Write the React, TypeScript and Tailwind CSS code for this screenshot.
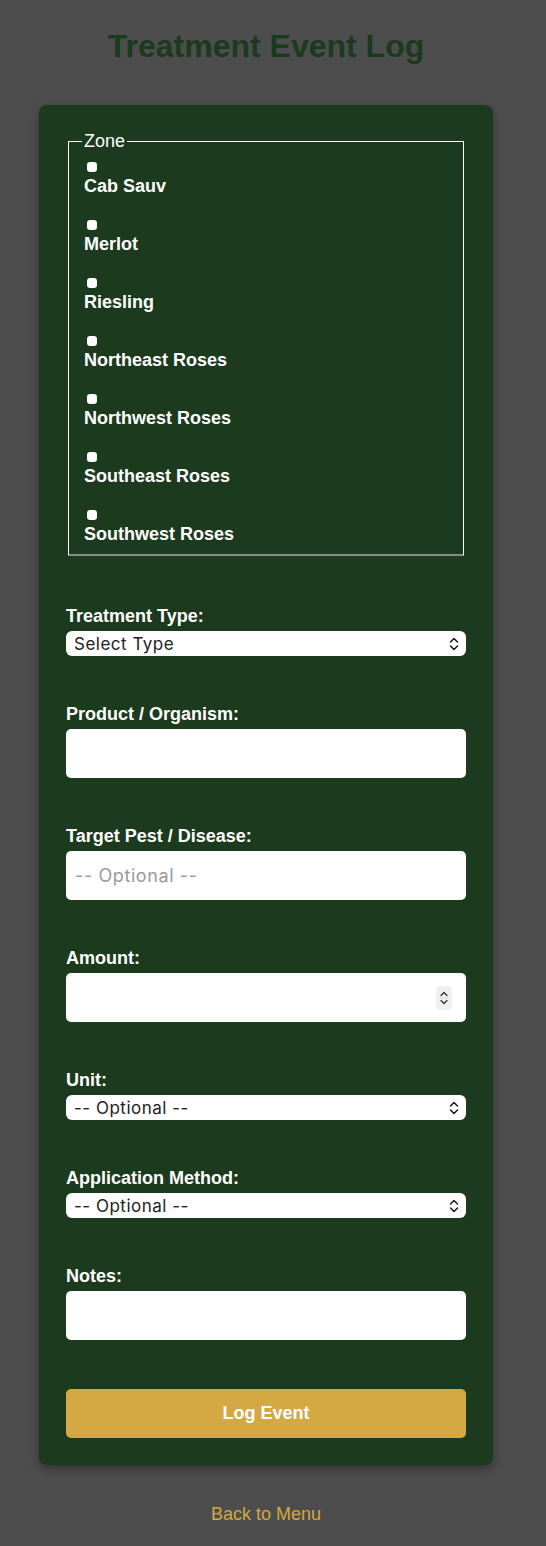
import React from "react";

const zones = [
  "Cab Sauv",
  "Merlot",
  "Riesling",
  "Northeast Roses",
  "Northwest Roses",
  "Southeast Roses",
  "Southwest Roses",
];

function Chevrons() {
  return (
    <svg width="10" height="14" viewBox="0 0 10 14" fill="none" stroke="#222" strokeWidth="1.6" strokeLinecap="round" strokeLinejoin="round">
      <path d="M1.5 5 L5 1.5 L8.5 5" />
      <path d="M1.5 9 L5 12.5 L8.5 9" />
    </svg>
  );
}

function Select({ text }: { text: string }) {
  return (
    <div className="h-[25px] w-full rounded-[6px] bg-white flex items-center pl-[8px] pr-[7px]">
      <span className="flex-1 text-[17px] leading-[20px] text-[#222] tracking-[0.5px]" style={{ fontFamily: "Inter, 'Liberation Sans', sans-serif" }}>
        {text}
      </span>
      <Chevrons />
    </div>
  );
}

function Label({ children }: { children: React.ReactNode }) {
  return <div className="mb-[6px] text-[18px] leading-[18px] font-bold text-white">{children}</div>;
}

export default function App() {
  return (
    <div className="min-h-[1546px] bg-[#4d4d4d]">
      <div className="w-[532px] pt-[28px] pb-[20px]" style={{ fontFamily: "'Liberation Sans', Arial, sans-serif" }}>
        <h1 className="text-center text-[32px] leading-[37px] font-bold text-[#1b3a1e] mb-[40px]">Treatment Event Log</h1>
        <div className="mx-auto w-[454px] rounded-[8px] bg-[#1b3a1e] p-[27px] shadow-[0_4px_10px_rgba(0,0,0,0.35)]">
          <fieldset className="mx-[2px] mb-[51px] border border-white border-b-2 border-b-[#8a8a8a] pl-[15px] pr-[12px] pt-[12px] pb-[11px]">
            <legend className="-ml-[2px] px-[2px] text-[18px] leading-[18px] text-white">Zone</legend>
            {zones.map((z, i) => (
              <div key={z} className={i < zones.length - 1 ? "mb-[25px]" : ""}>
                <span className="block ml-[3px] mb-[5px] h-[10px] w-[10px] rounded-[3px] bg-white" />
                <div className="text-[18px] leading-[18px] font-bold text-white">{z}</div>
              </div>
            ))}
          </fieldset>

          <div className="mb-[49px]">
            <Label>Treatment Type:</Label>
            <Select text="Select Type" />
          </div>

          <div className="mb-[49px]">
            <Label>Product / Organism:</Label>
            <div className="h-[49px] w-full rounded-[5px] bg-white" />
          </div>

          <div className="mb-[49px]">
            <Label>Target Pest / Disease:</Label>
            <div className="h-[49px] w-full rounded-[5px] bg-white flex items-center pl-[9px]">
              <span className="text-[18px] text-[#9a9a9a] tracking-[0.6px]" style={{ fontFamily: "Inter, 'Liberation Sans', sans-serif" }}>-- Optional --</span>
            </div>
          </div>

          <div className="mb-[49px]">
            <Label>Amount:</Label>
            <div className="h-[49px] w-full rounded-[5px] bg-white flex items-center justify-end pr-[14px]">
              <div className="w-[16px] h-[24px] rounded-[4px] bg-[#f0f0f0] flex flex-col items-center justify-center">
                <svg width="10" height="18" viewBox="0 0 10 18" fill="none" stroke="#333" strokeWidth="1.3" strokeLinecap="round" strokeLinejoin="round">
                  <path d="M2 6.5 L5 3.5 L8 6.5" />
                  <path d="M1 9 L9 9" stroke="#e0e0e0" />
                  <path d="M2 11.5 L5 14.5 L8 11.5" />
                </svg>
              </div>
            </div>
          </div>

          <div className="mb-[49px]">
            <Label>Unit:</Label>
            <Select text="-- Optional --" />
          </div>

          <div className="mb-[49px]">
            <Label>Application Method:</Label>
            <Select text="-- Optional --" />
          </div>

          <div className="mb-[49px]">
            <Label>Notes:</Label>
            <div className="h-[49px] w-full rounded-[5px] bg-white" />
          </div>

          <button className="block h-[49px] w-full rounded-[5px] bg-[#d4a843] text-[18px] font-bold text-white">Log Event</button>
        </div>
        <div className="mt-[38px] text-center text-[18px] leading-[22px] text-[#d4a843]">Back to Menu</div>
      </div>
    </div>
  );
}
